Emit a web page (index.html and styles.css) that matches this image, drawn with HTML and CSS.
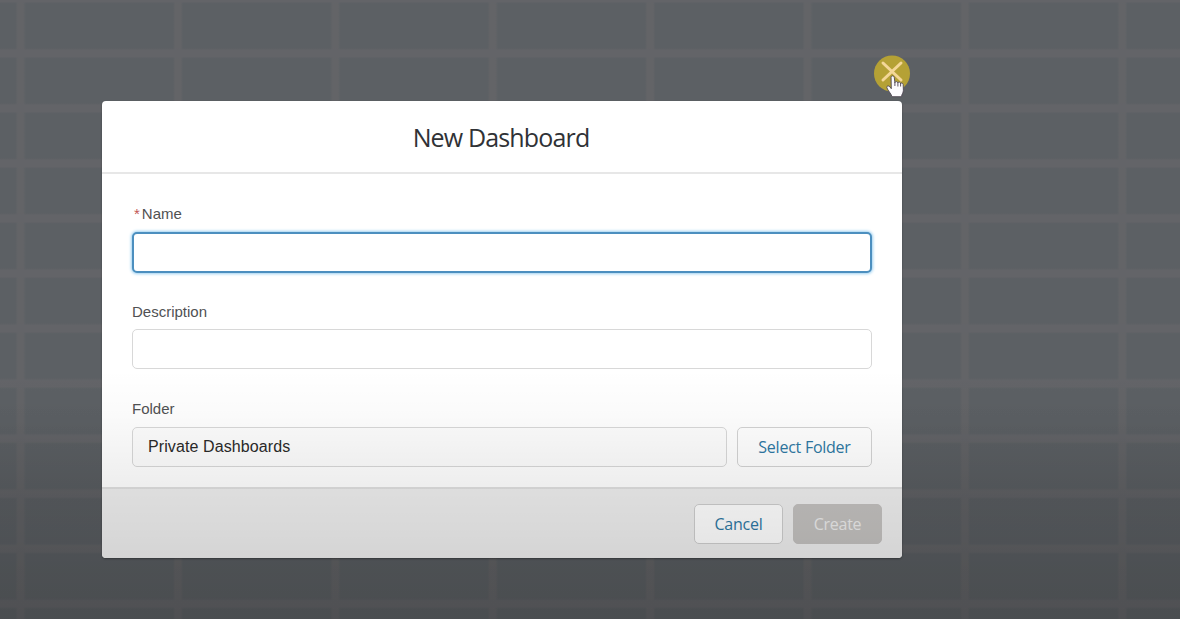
FILE: index.html
```html
<!DOCTYPE html>
<html lang="en">
<head>
<meta charset="utf-8">
<title>New Dashboard</title>
<link rel="stylesheet" href="styles.css">
</head>
<body>
<main class="backdrop">
  <section class="modal" role="dialog" aria-labelledby="title">
    <button class="close" aria-label="Close">
      <svg width="46" height="50" viewBox="0 0 46 50">
        <circle cx="22" cy="22.500" r="18" fill="#b5a135"/>
        <path d="M13 12L31 29M31 12L13 29" stroke="#f4d797" stroke-width="3" stroke-linecap="round"/>
        <path d="M21.700 25.500c0-1.900 2.600-1.900 2.900 0l.6 4.700c.2-1.300 2.500-1.300 2.700.2.400-1.100 2.400-.8 2.500.6.600-.9 2.200-.3 2.300 1l.2 5.200c0 2.500-1.600 3.500-1.700 5.800h-8.700c-.4-2.600-3.800-5.400-4.600-8.200-.4-1.700 1.600-2.200 2.700-.8l1.300 1.700z" transform="translate(-2.800 -1.600) scale(1.100)" fill="#fcfbfe" stroke="#4b4350" stroke-width=".8"/>
        <path d="M24.900 31v4M27.900 31.500v4M30.600 32v3.500" stroke="#4a4051" stroke-width=".9" fill="none"/>
      </svg>
    </button>
    <header class="modal-header"><h1 class="title" id="title">New Dashboard</h1></header>
    <div class="modal-body">
      <div class="field">
        <label class="label required" for="name"><span class="star">*</span>Name</label>
        <input class="input focused" id="name" type="text">
      </div>
      <div class="field">
        <label class="label description-label" for="description">Description</label>
        <input class="input" id="description" type="text">
      </div>
      <div class="field">
        <span class="label">Folder</span>
        <div class="folder-row">
          <div class="input folder"><span class="folder-text">Private Dashboards</span></div>
          <button class="button select"><span>Select Folder</span></button>
        </div>
      </div>
    </div>
    <footer class="modal-footer">
      <button class="button cancel"><span>Cancel</span></button>
      <button class="button create" disabled><span>Create</span></button>
    </footer>
  </section>
</main>
</body>
</html>
```
FILE: styles.css
```css
* { box-sizing: border-box; }
body { margin: 0; font-family: "Liberation Sans", Arial, sans-serif; }
.backdrop {
  position: relative;
  height: 619px;
  overflow: hidden;
  padding: 101px 0 0 102px;
  background-color: #5c6064;
  background-image:
    linear-gradient(to bottom, transparent 400px, rgba(0,0,0,.06) 500px, rgba(0,0,0,.07) 619px),
    linear-gradient(to bottom, transparent, #636468 2px, #636468 8.500px, transparent 10.500px),
    linear-gradient(to right, transparent, #636467 2px, #636467 8px, transparent 10px);
  background-size: 100% 100%, 100% 55.05px, 157.400px 100%;
  background-position: 0 0, 0 -7px, 15.500px 0;
}
/* Darkening toward the bottom of the window */
.backdrop::after {
  content: "";
  position: absolute;
  inset: 0;
  pointer-events: none;
  background: linear-gradient(to bottom, transparent 370px, rgba(0,0,0,.02) 415px, rgba(0,0,0,.05) 460px, rgba(0,0,0,.07) 490px, rgba(0,0,0,.09) 530px, rgba(0,0,0,.11) 560px, rgba(0,0,0,.14) 619px);
}
.modal {
  position: relative;
  display: flex;
  flex-direction: column;
  width: 800px;
  height: 457px;
  border-radius: 4px;
  background: #fff;
  box-shadow: 0 1px 2px rgba(0,0,0,.35);
}
.close {
  position: absolute;
  top: -50px;
  right: -14px;
  width: 46px;
  height: 50px;
  padding: 0;
  border: 0;
  background: none;
}
.close svg { display: block; }
.modal-header {
  display: flex;
  flex-shrink: 0;
  align-items: center;
  justify-content: center;
  height: 73px;
  border-bottom: 2px solid #e7e7e7;
}
.title {
  margin: 0;
  padding: 1px 2px 0 0;
  font: 400 25px/34px "Open Sans", "Noto Sans", sans-serif;
  letter-spacing: -.85px;
  color: #303236;
}
.modal-body {
  flex: 1;
  min-height: 0;
  display: flex;
  flex-direction: column;
  padding: 30px 30px 0;
}
.field { flex: 0 0 97.500px; }
.field:last-child { flex-basis: 68px; }
.label {
  display: block;
  height: 28px;
  font-size: 15px;
  line-height: 20px;
  color: #505153;
}
.required { height: 27.500px; padding-left: 2px; }
.description-label { height: 27px; }
.star { margin-right: 2px; color: #c25652; }
.input {
  display: block;
  width: 100%;
  height: 40px;
  padding: 0 15px;
  border: 1.500px solid #d8d8d8;
  border-radius: 5px;
  outline: 0;
  background: #fff;
  font: 16px "Liberation Sans", Arial, sans-serif;
}
.focused {
  height: 41px;
  border: 2px solid #4c8fbf;
  box-shadow: 0 0 3px 1px #9bcff0;
}
.folder-row { display: flex; gap: 10px; }
.folder {
  flex: 1;
  line-height: 37px;
  letter-spacing: .1px;
  color: #2a2a2a;
  background: #fdfdfd;
}
.button {
  height: 40px;
  padding: 0;
  border: 1.500px solid #d3d3d3;
  border-radius: 5px;
  background: #fff;
  font: 400 16px "Open Sans", "Noto Sans", sans-serif;
  letter-spacing: -.25px;
  color: #2e78a3;
}
.select { width: 135px; }
.modal-footer {
  display: flex;
  flex-shrink: 0;
  justify-content: flex-end;
  gap: 10px;
  height: 71px;
  padding: 15px 20px 0 0;
  border-top: 2px solid #dfdfdf;
  border-radius: 0 0 4px 4px;
  background: #eee;
}
.cancel { width: 89px; border-color: #cecece; }
.create { width: 89px; border-color: #c3c1bf; background: #c3c1bf; color: #ececec; }
```
